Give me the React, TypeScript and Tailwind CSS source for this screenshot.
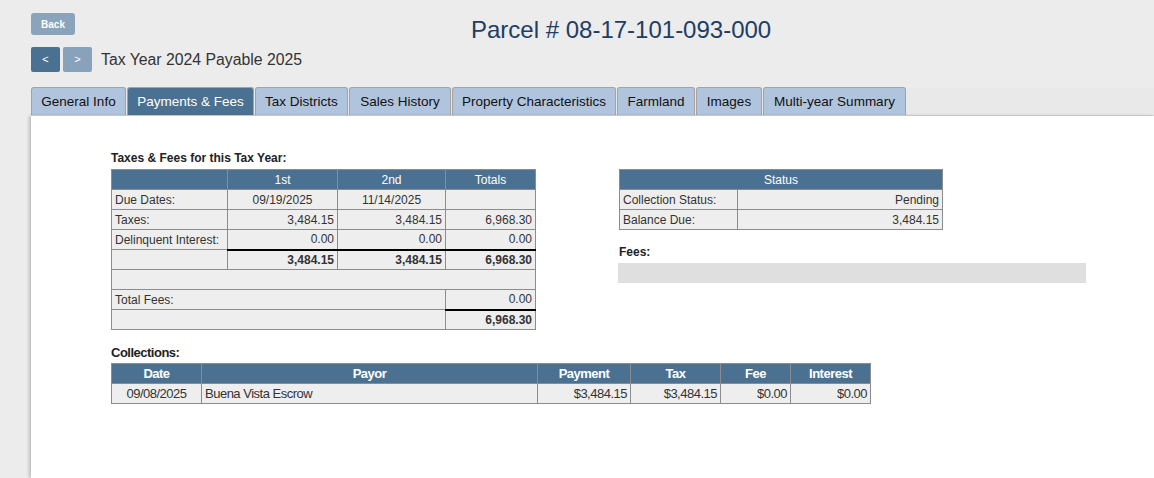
import React from "react";

const TABS: { label: string; w: number; active?: boolean }[] = [
  { label: "General Info", w: 95 },
  { label: "Payments & Fees", w: 127, active: true },
  { label: "Tax Districts", w: 93 },
  { label: "Sales History", w: 102 },
  { label: "Property Characteristics", w: 164 },
  { label: "Farmland", w: 78 },
  { label: "Images", w: 66 },
  { label: "Multi-year Summary", w: 143 },
];

const cell = "border border-[#8c8c8c] bg-[#eeeeee] h-[20px] px-[3px] py-0 leading-[18px]";
const head = "border border-[#8c8c8c] bg-[#4b7192] text-white h-[20px] py-0 leading-[18px]";
const narrow = "text-[13px] tracking-[-0.5px]";

function TaxesTable() {
  return (
    <table className="border-collapse table-fixed w-[424px] text-[12px] text-[#333]">
      <colgroup>
        <col className="w-[116px]" />
        <col className="w-[110px]" />
        <col className="w-[108px]" />
        <col className="w-[90px]" />
      </colgroup>
      <thead>
        <tr>
          <th className={`${head} font-normal`}></th>
          <th className={`${head} font-normal text-center`}>1st</th>
          <th className={`${head} font-normal text-center`}>2nd</th>
          <th className={`${head} font-normal text-center`}>Totals</th>
        </tr>
      </thead>
      <tbody>
        <tr>
          <td className={cell}>Due Dates:</td>
          <td className={`${cell} text-center`}>09/19/2025</td>
          <td className={`${cell} text-center`}>11/14/2025</td>
          <td className={cell}></td>
        </tr>
        <tr>
          <td className={cell}>Taxes:</td>
          <td className={`${cell} text-right`}>3,484.15</td>
          <td className={`${cell} text-right`}>3,484.15</td>
          <td className={`${cell} text-right`}>6,968.30</td>
        </tr>
        <tr>
          <td className={cell}>Delinquent Interest:</td>
          <td className={`${cell} text-right`}>0.00</td>
          <td className={`${cell} text-right`}>0.00</td>
          <td className={`${cell} text-right`}>0.00</td>
        </tr>
        <tr>
          <td className={cell}></td>
          <td className={`${cell} text-right font-bold border-t-2 border-t-black`}>3,484.15</td>
          <td className={`${cell} text-right font-bold border-t-2 border-t-black`}>3,484.15</td>
          <td className={`${cell} text-right font-bold border-t-2 border-t-black`}>6,968.30</td>
        </tr>
        <tr>
          <td className={cell} colSpan={4}></td>
        </tr>
        <tr>
          <td className={cell} colSpan={3}>Total Fees:</td>
          <td className={`${cell} text-right`}>0.00</td>
        </tr>
        <tr>
          <td className={cell} colSpan={3}></td>
          <td className={`${cell} text-right font-bold border-t-2 border-t-black`}>6,968.30</td>
        </tr>
      </tbody>
    </table>
  );
}

function StatusTable() {
  return (
    <table className="border-collapse table-fixed w-[323px] text-[12px] text-[#333]">
      <colgroup>
        <col className="w-[118px]" />
        <col className="w-[205px]" />
      </colgroup>
      <thead>
        <tr>
          <th className={`${head} font-normal text-center`} colSpan={2}>Status</th>
        </tr>
      </thead>
      <tbody>
        <tr>
          <td className={cell}>Collection Status:</td>
          <td className={`${cell} text-right bg-[#63b0ef]`}>Pending</td>
        </tr>
        <tr>
          <td className={cell}>Balance Due:</td>
          <td className={`${cell} text-right`}>3,484.15</td>
        </tr>
      </tbody>
    </table>
  );
}

function CollectionsTable() {
  const cols = [
    { label: "Date", w: 90 },
    { label: "Payor", w: 336 },
    { label: "Payment", w: 93 },
    { label: "Tax", w: 90 },
    { label: "Fee", w: 70 },
    { label: "Interest", w: 80 },
  ];
  return (
    <table className={`border-collapse table-fixed w-[759px] text-[#333] ${narrow}`}>
      <colgroup>
        {cols.map((c) => (
          <col key={c.label} style={{ width: c.w }} />
        ))}
      </colgroup>
      <thead>
        <tr>
          {cols.map((c) => (
            <th key={c.label} className={`${head} text-center font-bold`}>
              {c.label}
            </th>
          ))}
        </tr>
      </thead>
      <tbody>
        <tr>
          <td className={`${cell} text-center`}>09/08/2025</td>
          <td className={cell}>Buena Vista Escrow</td>
          <td className={`${cell} text-right`}>$3,484.15</td>
          <td className={`${cell} text-right`}>$3,484.15</td>
          <td className={`${cell} text-right`}>$0.00</td>
          <td className={`${cell} text-right`}>$0.00</td>
        </tr>
      </tbody>
    </table>
  );
}

export default function App() {
  return (
    <div className="min-h-[478px] bg-[#ececec] font-['Liberation_Sans',Arial,sans-serif] text-[#333] flex flex-col">
      {/* header */}
      <div className="flex pl-[31px] h-[88px]">
        <div className="w-[440px] flex flex-col">
          <button
            type="button"
            className="mt-[13px] w-[44px] h-[22px] rounded-[3px] bg-[#8aa4bc] text-white text-[10px] font-bold"
          >
            Back
          </button>
          <div className="mt-[12px] flex items-center">
            <button type="button" className="w-[29px] h-[25px] rounded-[2px] bg-[#4b7192] text-white text-[11px]">
              &lt;
            </button>
            <button type="button" className="ml-[3px] w-[29px] h-[25px] rounded-[2px] bg-[#88a2bb] text-white text-[11px]">
              &gt;
            </button>
            <span className="ml-[9px] text-[15.8px] text-[#333]">Tax Year 2024 Payable 2025</span>
          </div>
        </div>
        <h1 className="mt-[14px] text-[24px] leading-[32px] text-[#203d66]">Parcel # 08-17-101-093-000</h1>
      </div>

      {/* tabs */}
      <div className="ml-[31px] flex items-end gap-[1px] h-[28px] bg-[#e9e9e9] border-b border-[#d6d6d6]">
        {TABS.map((t) => (
          <div
            key={t.label}
            style={{ width: t.w }}
            className={`h-[28px] pt-[2px] flex items-center justify-center rounded-t-[3px] border border-b-0 border-[#a3a3a3] text-[13.5px] ${
              t.active ? "bg-[#4b7192] text-white" : "bg-[#b0c4de] text-[#111]"
            }`}
          >
            {t.label}
          </div>
        ))}
      </div>

      {/* panel */}
      <div className="ml-[31px] flex-1 bg-white shadow-[-2px_0_3px_rgba(0,0,0,0.2)] pl-[80px] pt-[35px] pb-[60px]">
        <div className="flex">
          <div>
            <div className="h-[18px] text-[12px] font-bold text-[#222] leading-[15px]">Taxes &amp; Fees for this Tax Year:</div>
            <TaxesTable />
          </div>
          <div className="ml-[83px] pt-[18px]">
            <StatusTable />
            <div className="mt-[15px] text-[12px] font-bold text-[#222] leading-[15px]">Fees:</div>
            <div className="mt-[3px] -ml-px w-[468px] h-[20px] bg-[#dfdfdf]" />
          </div>
        </div>
        <div className={`mt-[15px] h-[18px] font-bold text-[#222] leading-[15px] ${narrow}`}>Collections:</div>
        <CollectionsTable />
      </div>
    </div>
  );
}
